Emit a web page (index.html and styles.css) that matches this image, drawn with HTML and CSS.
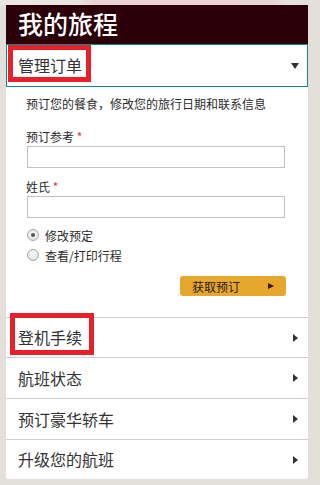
FILE: index.html
```html
<!DOCTYPE html>
<html lang="zh">
<head>
<meta charset="utf-8">
<title>我的旅程</title>
<link rel="stylesheet" href="styles.css">
</head>
<body>
<div class="panel">
  <h1 class="title">我的旅程</h1>
  <div class="acc-head active">
    <span class="label mark mark-1">管理订单</span>
    <span class="tri-down"></span>
  </div>
  <div class="acc-body">
    <p class="intro">预订您的餐食，修改您的旅行日期和联系信息</p>
    <label class="field-label">预订参考 <span class="req">*</span></label>
    <div class="input"></div>
    <label class="field-label second">姓氏 <span class="req">*</span></label>
    <div class="input"></div>
    <div class="radios">
      <div class="radio-row"><span class="radio checked"></span><span>修改预定</span></div>
      <div class="radio-row"><span class="radio"></span><span>查看/打印行程</span></div>
    </div>
    <div class="btn-row">
      <div class="btn"><span>获取预订</span><span class="tri-btn"></span></div>
    </div>
  </div>
  <div class="acc-row first"><span class="label mark mark-2">登机手续</span><span class="tri-right"></span></div>
  <div class="acc-row"><span class="label">航班状态</span><span class="tri-right"></span></div>
  <div class="acc-row"><span class="label">预订豪华轿车</span><span class="tri-right"></span></div>
  <div class="acc-row last"><span class="label">升级您的航班</span><span class="tri-right"></span></div>
</div>
</body>
</html>
```
FILE: styles.css
```css
* { box-sizing: border-box; }
html, body { margin: 0; padding: 0; }
body {
  width: 314px;
  height: 485px;
  overflow: hidden;
  font-family: "Noto Sans CJK SC", "Noto Sans", sans-serif;
  color: #2b2b2b;
  background:
    linear-gradient(to right, #ebe8e4 0, #e9e5e1 24%, #e8d2d2 30%, #e9d4d4 84%, #e6e2de 90%, #e4e1dd 100%) top left / 100% 5px no-repeat,
    #e3e0dc;
}
.panel {
  margin: 5px 0 0 6px;
  width: 302px;
  background: #fff;
  border-radius: 0 0 3px 3px;
}
.title {
  margin: 0;
  height: 39px;
  background: #2b0009;
  color: #fff;
  font-size: 25px;
  font-weight: 500;
  line-height: 37px;
  padding-left: 12px;
}
.acc-head {
  height: 43px;
  border: 1px solid #15868c;
  display: flex;
  align-items: center;
  justify-content: space-between;
  padding: 0 8px 0 11px;
}
.label {
  font-size: 16px;
  line-height: 17px;
  color: #333;
}
.mark { position: relative; }
.mark::after {
  content: "";
  position: absolute;
  border: 5px solid #e8202a;
}
.mark-1::after { left: -10px; right: -9px; top: -12px; bottom: -8px; }
.mark-2::after { left: -8px; right: -12px; top: -16px; bottom: -9px; }
.tri-down {
  width: 0; height: 0;
  border-left: 4px solid transparent;
  border-right: 4px solid transparent;
  border-top: 6px solid #333;
}
.acc-body {
  padding: 9px 22px 21px 20px;
}
.intro {
  margin: 0;
  font-size: 12px;
  line-height: 16px;
}
.field-label {
  display: block;
  margin-top: 17px;
  font-size: 12px;
  line-height: 16px;
}
.field-label.second { margin-top: 11px; }
.req { color: #e0383a; }
.input {
  margin: 1px 1px 0 1px;
  height: 22px;
  border: 1px solid #c2c2c2;
  background: #fff;
}
.radios { margin-top: 7px; }
.radio-row {
  display: flex;
  align-items: center;
  gap: 6px;
  height: 20px;
  font-size: 12px;
  padding-left: 1px;
}
.radio {
  width: 12px;
  height: 12px;
  border-radius: 50%;
  border: 1px solid #a8a8a8;
  background: radial-gradient(circle at 50% 40%, #fbfbfb 0, #e0e0e0 80%);
  display: flex;
  align-items: center;
  justify-content: center;
}
.radio.checked::after {
  content: "";
  width: 4px;
  height: 4px;
  border-radius: 50%;
  background: #555;
}
.btn-row {
  display: flex;
  justify-content: flex-end;
  margin-top: 11px;
}
.btn {
  width: 106px;
  height: 20px;
  border-radius: 3px;
  background: #e6a72d;
  display: flex;
  align-items: center;
  justify-content: space-between;
  padding: 0 12px 0 12px;
  font-size: 12px;
  color: #2a1a10;
}
.tri-btn {
  width: 0; height: 0;
  border-top: 3.5px solid transparent;
  border-bottom: 3.5px solid transparent;
  border-left: 6px solid #3a1212;
}
.acc-row {
  height: 41px;
  border-top: 1px solid #cfcfcf;
  display: flex;
  align-items: center;
  justify-content: space-between;
  padding: 0 10px 0 12px;
}
.acc-row.first, .acc-row.last { height: 40px; }
.tri-right {
  width: 0; height: 0;
  border-top: 4px solid transparent;
  border-bottom: 4px solid transparent;
  border-left: 5px solid #333;
}
```
